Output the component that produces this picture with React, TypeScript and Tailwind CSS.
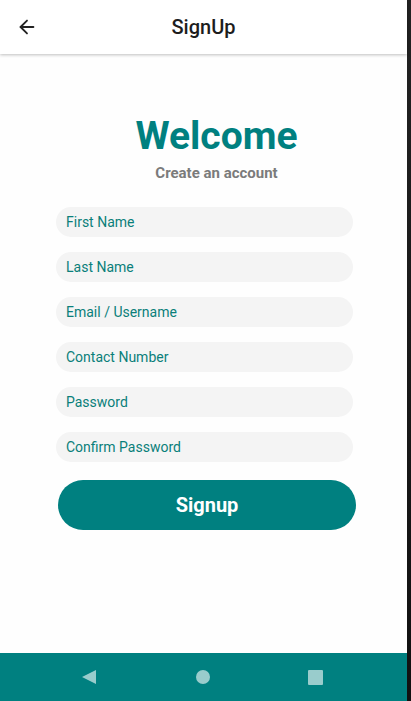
import { ArrowLeft } from 'lucide-react';

const fields = [
  'First Name',
  'Last Name',
  'Email / Username',
  'Contact Number',
  'Password',
  'Confirm Password',
];

export default function App() {
  return (
    <div className="flex h-[701px] w-[411px] overflow-hidden bg-white font-['Roboto',sans-serif]">
      <div className="flex w-[407px] flex-col">
        {/* Top bar */}
        <header className="relative z-10 flex h-[54px] items-center bg-white shadow-[0_1px_3px_rgba(0,0,0,0.25)]">
          <button className="ml-[16px] flex h-[22px] w-[22px] items-center justify-center text-[#222]">
            <ArrowLeft size={22} strokeWidth={2} />
          </button>
          <h1 className="absolute left-0 right-0 text-center text-[20px] font-medium text-[#1d1d1d] pointer-events-none">
            SignUp
          </h1>
        </header>

        {/* Form */}
        <main className="flex flex-1 flex-col items-center bg-[#fefefe] pt-[60px]">
          <div className="ml-[26px] flex flex-col items-center">
            <h2 className="text-[39px] font-bold leading-[44px] text-[#008080]">Welcome</h2>
            <p className="mt-[6px] text-[15px] font-bold leading-[18px] text-[#7b7b7b]">Create an account</p>
          </div>

          <form className="mt-[25px] ml-[2px] flex w-[297px] flex-col gap-[15px]">
            {fields.map((f) => (
              <input
                key={f}
                type="text"
                placeholder={f}
                className="h-[30px] w-full rounded-full bg-[#f4f4f4] px-[10px] text-[14px] text-[#008080] placeholder:text-[#0a7f7a] focus:outline-none"
              />
            ))}
            <button
              type="button"
              className="mt-[3px] ml-[2px] h-[50px] w-[298px] rounded-full bg-[#008080] text-[20px] font-bold text-white"
            >
              Signup
            </button>
          </form>
        </main>

        {/* Nav bar */}
        <nav className="flex h-[48px] items-center bg-[#008080]">
          <div className="flex w-full items-center">
            <div className="ml-[82px] h-0 w-0 border-y-[7.5px] border-r-[14px] border-y-transparent border-r-[#99cccc]" />
            <div className="ml-[100px] h-[14px] w-[14px] rounded-full bg-[#99cccc]" />
            <div className="ml-[98px] h-[15px] w-[15px] rounded-[1px] bg-[#99cccc]" />
          </div>
        </nav>
      </div>
      <div className="w-[4px] bg-gradient-to-b from-[#222] to-[#111]" />
    </div>
  );
}
